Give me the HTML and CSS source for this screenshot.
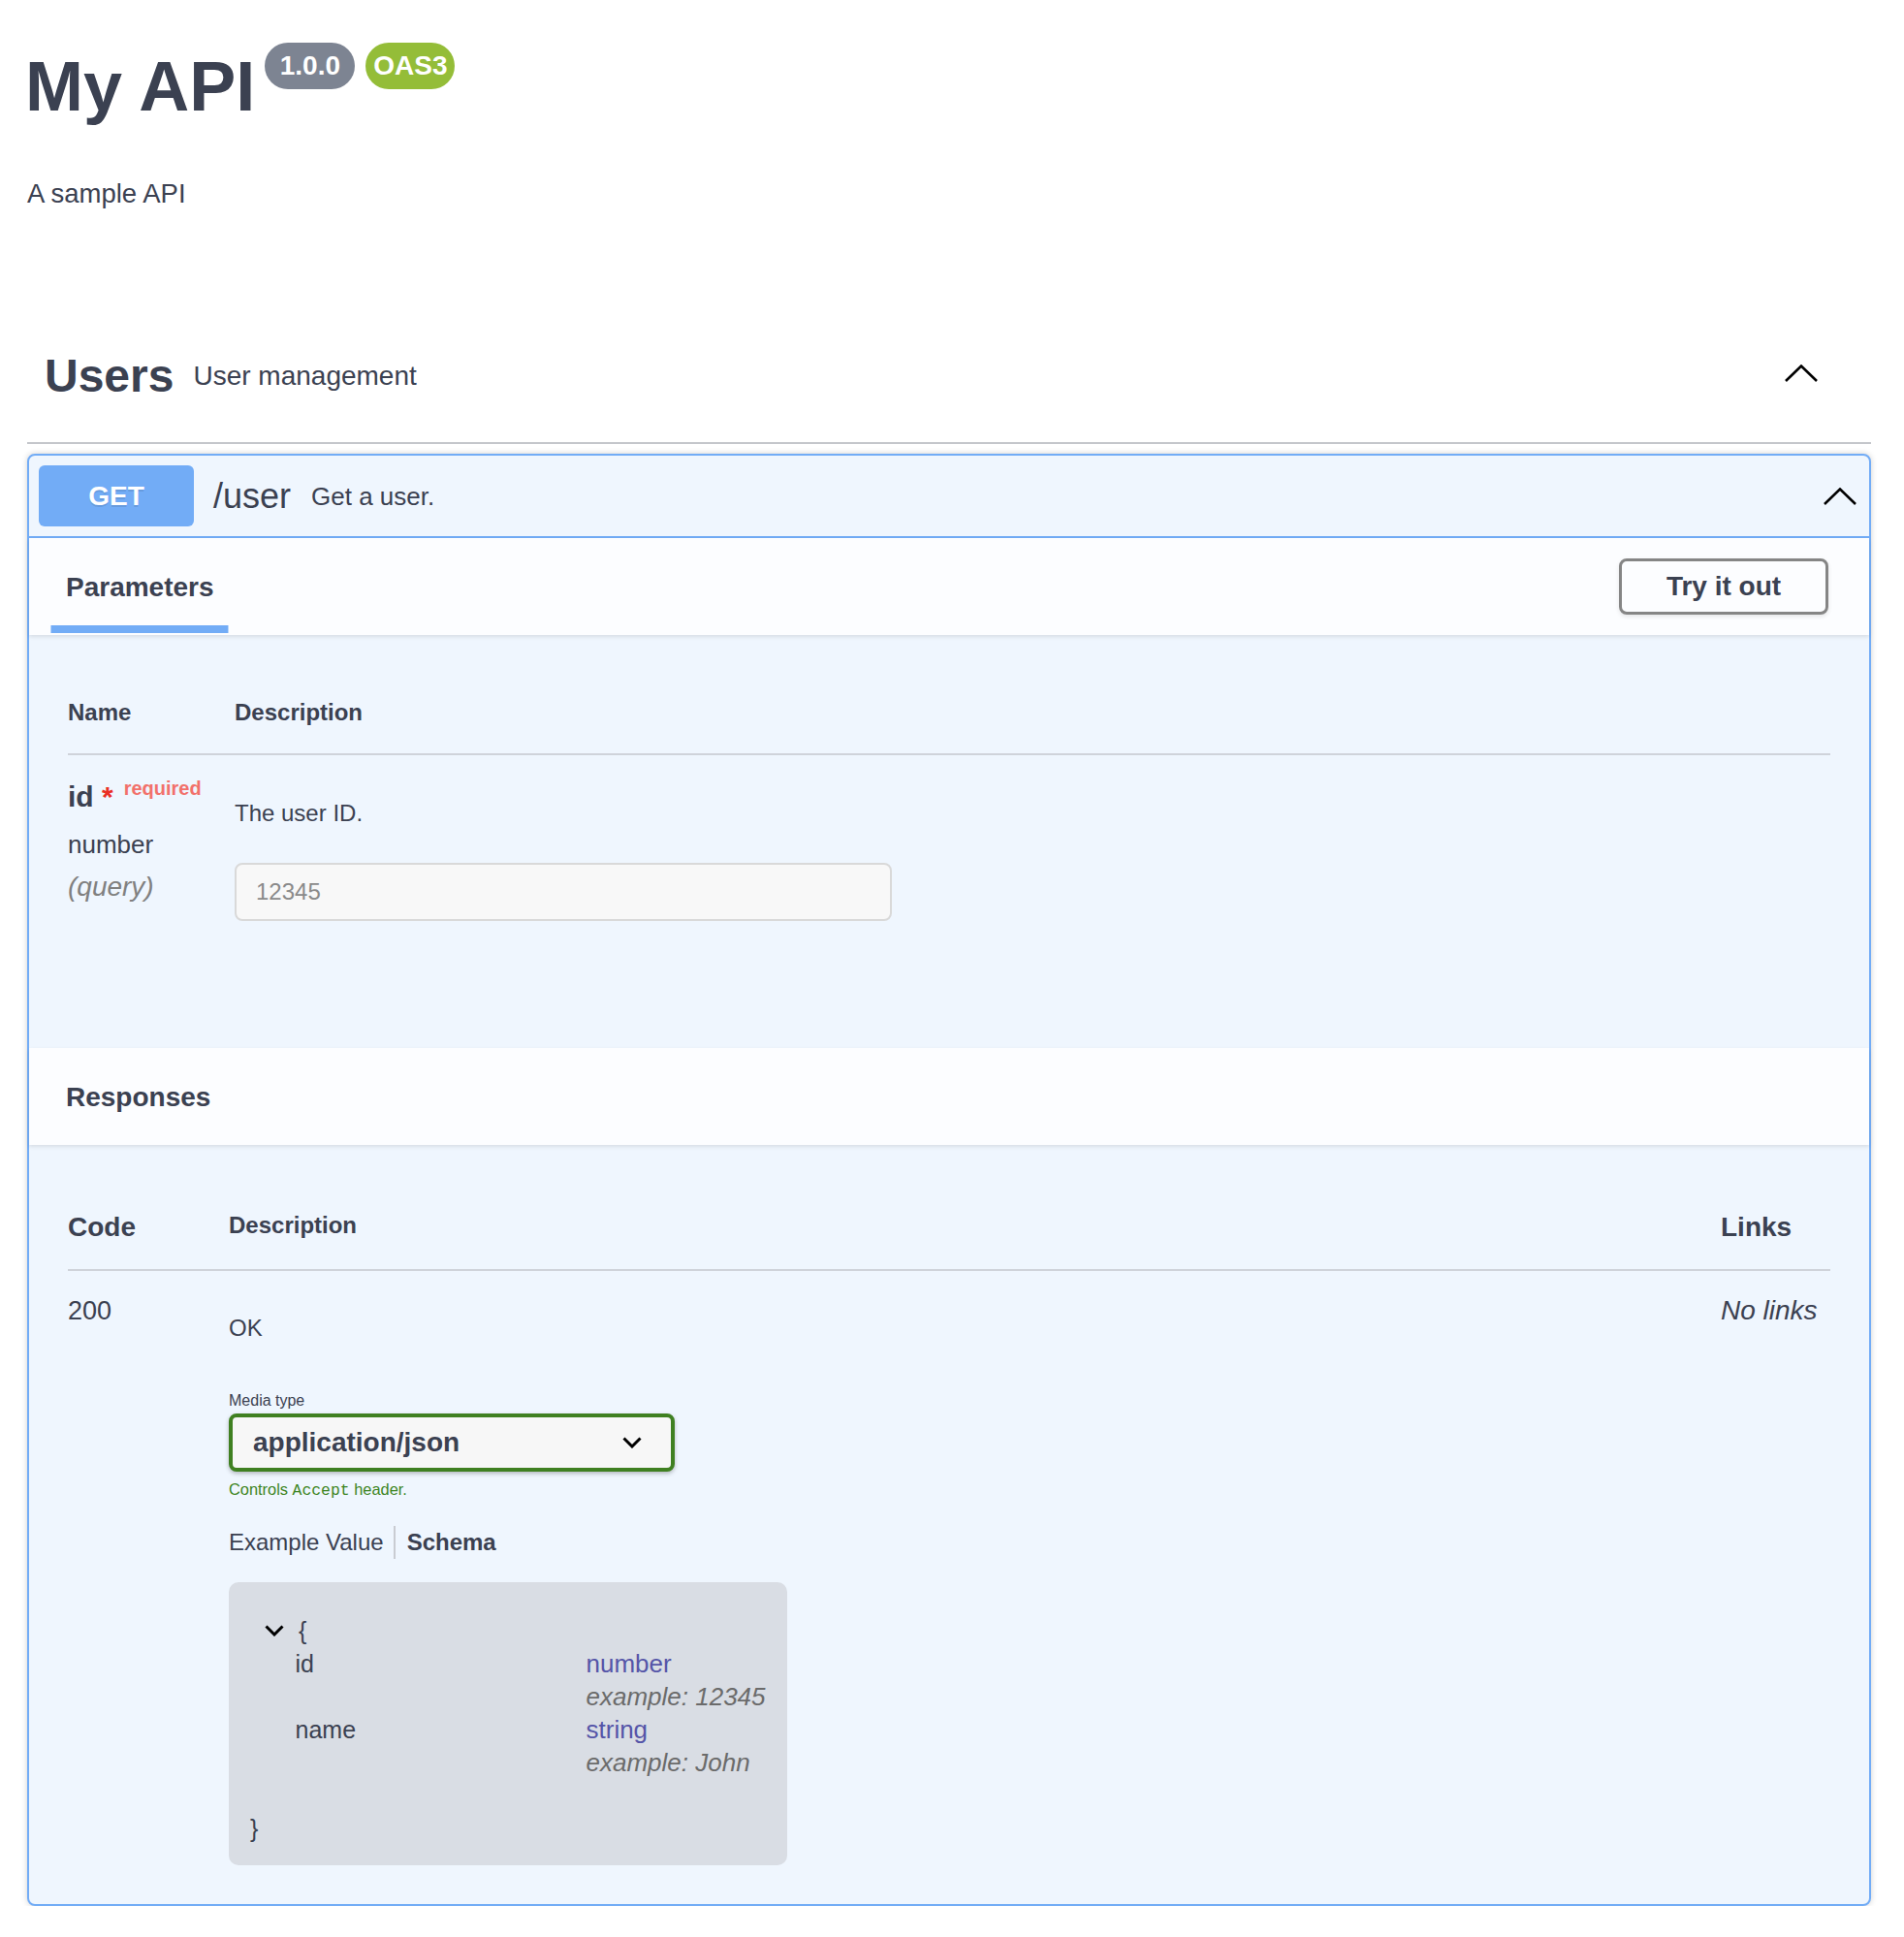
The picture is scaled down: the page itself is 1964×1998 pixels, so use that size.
FILE: index.html
```html
<!DOCTYPE html>
<html lang="en">
<head>
<meta charset="utf-8">
<title>My API</title>
<link rel="stylesheet" href="styles.css">
</head>
<body>
<div class="wrapper">
  <section class="info">
    <div class="title-row">
      <h2 class="title">My API</h2>
      <span class="badge badge-version">1.0.0</span>
      <span class="badge badge-oas">OAS3</span>
    </div>
    <p class="info-desc">A sample API</p>
  </section>

  <section class="tag-section">
    <div class="tag-header">
      <h3 class="tag-name">Users</h3>
      <span class="tag-desc">User management</span>
      <svg class="chev chev-tag" viewBox="0 0 34 18"><polyline points="1,17 17,1.5 33,17"/></svg>
    </div>

    <div class="opblock">
      <div class="summary">
        <span class="method">GET</span>
        <span class="path">/user</span>
        <span class="summary-desc">Get a user.</span>
        <svg class="chev chev-op" viewBox="0 0 34 18"><polyline points="1,17 17,1.5 33,17"/></svg>
      </div>

      <div class="section-header">
        <div class="tab-item"><h4 class="tab-title">Parameters</h4></div>
        <button class="try-btn" type="button">Try it out</button>
      </div>

      <div class="params-body">
        <div class="ptable-head">
          <div class="col-name">Name</div>
          <div class="col-desc">Description</div>
        </div>
        <div class="ptable-row">
          <div class="col-name">
            <div class="param-name">id<span class="star">&nbsp;*</span><span class="req">required</span></div>
            <div class="param-type">number</div>
            <div class="param-in">(query)</div>
          </div>
          <div class="col-desc">
            <p class="param-desc">The user ID.</p>
            <input class="param-input" type="text" placeholder="12345">
          </div>
        </div>
      </div>

      <div class="section-header resp-header">
        <h4 class="section-title">Responses</h4>
      </div>

      <div class="resp-body">
        <div class="rtable-head">
          <div class="r-code rh-big">Code</div>
          <div class="r-desc rh-small">Description</div>
          <div class="r-links rh-big">Links</div>
        </div>
        <div class="rtable-row">
          <div class="r-code code-val">200</div>
          <div class="r-desc resp-desc">
            <p class="ok">OK</p>
            <div class="media-title">Media type</div>
            <div class="media-select">
              <span>application/json</span>
              <svg class="sel-chev" viewBox="0 0 20 12"><polyline points="1.5,1.5 10,10 18.5,1.5"/></svg>
            </div>
            <div class="accept-msg">Controls <code>Accept</code> header.</div>
            <ul class="ex-tabs">
              <li class="ex-tab first">Example Value</li>
              <li class="ex-tab active">Schema</li>
            </ul>
            <div class="model-box">
              <div class="m-line">
                <svg class="m-chev" viewBox="0 0 20 12"><polyline points="1.5,1.5 10,10 18.5,1.5"/></svg>
                <span>{</span>
              </div>
              <div class="m-prop">
                <span class="m-key">id</span>
                <div class="m-val">
                  <div class="m-type">number</div>
                  <div class="m-ex">example: 12345</div>
                </div>
              </div>
              <div class="m-prop">
                <span class="m-key">name</span>
                <div class="m-val">
                  <div class="m-type">string</div>
                  <div class="m-ex">example: John</div>
                </div>
              </div>
              <div class="m-line"></div>
              <div class="m-line">}</div>
            </div>
          </div>
          <div class="r-links no-links">No links</div>
        </div>
      </div>
    </div>
  </section>
</div>
</body>
</html>
```

FILE: styles.css
```css
* { box-sizing: border-box; }

html, body { margin: 0; padding: 0; }

body {
  background: #ffffff;
  color: #3b4151;
  font-family: "Liberation Sans", Arial, Helvetica, sans-serif;
}

.wrapper { padding: 0 34px 0 28px; }

/* ---------- info ---------- */
.title-row {
  display: flex;
  align-items: flex-start;
  padding-top: 44px;
}

.title {
  margin: 5px 0 0 -2px;
  font-size: 72px;
  line-height: 80px;
  font-weight: 700;
}

.badge {
  display: block;
  height: 48px;
  line-height: 48px;
  border-radius: 24px;
  color: #ffffff;
  font-size: 28px;
  font-weight: 700;
  text-align: center;
}

.badge-version { width: 93px; margin-left: 10px; background: #7d8492; }
.badge-oas { width: 92px; margin-left: 11px; background: #94bd38; }

.info-desc {
  margin: 53px 0 0;
  font-size: 27.5px;
  line-height: 36px;
}

/* ---------- tag ---------- */
.tag-section { margin-top: 121px; }

.tag-header {
  display: flex;
  align-items: center;
  padding: 21px 55px 40px 18px;
  border-bottom: 2px solid #c4c6cb;
}

.tag-name {
  margin: 0;
  font-size: 48px;
  line-height: 56px;
  font-weight: 700;
}

.tag-desc {
  flex: 1;
  padding: 0 20px;
  font-size: 28px;
  line-height: 32px;
}

.chev {
  display: block;
  flex: none;
  width: 34px;
  height: 18px;
  fill: none;
  stroke: #000000;
  stroke-width: 2.6;
}

.chev-tag { margin-bottom: 6px; }

/* ---------- opblock ---------- */
.opblock {
  margin-top: 10px;
  border: 2px solid #72acf6;
  border-radius: 8px;
  background: #eff6fe;
  box-shadow: 0 0 6px rgba(0, 0, 0, 0.19);
}

.summary {
  display: flex;
  align-items: center;
  padding: 10px 13px 10px 10px;
  border-bottom: 2px solid #72acf6;
}

.method {
  flex: none;
  width: 160px;
  height: 63px;
  line-height: 63px;
  border-radius: 6px;
  background: #72acf6;
  color: #ffffff;
  font-size: 28px;
  font-weight: 700;
  text-align: center;
  text-shadow: 0 2px 0 rgba(0, 0, 0, 0.1);
}

.path {
  padding: 0 20px;
  font-size: 36px;
  line-height: 42px;
}

.summary-desc {
  flex: 1;
  padding-left: 1px;
  font-size: 26px;
  line-height: 30px;
}

.section-header {
  position: relative;
  display: flex;
  align-items: center;
  justify-content: space-between;
  height: 100px;
  padding: 2px 42px 0 38px;
  background: rgba(255, 255, 255, 0.8);
  box-shadow: 0 2px 4px rgba(0, 0, 0, 0.1);
}

.tab-title,
.section-title {
  margin: 0;
  font-size: 28px;
  line-height: 32px;
  font-weight: 700;
}

.tab-title { position: relative; }

.tab-title::after {
  content: "";
  position: absolute;
  left: 50%;
  bottom: -31px;
  width: 120%;
  height: 8px;
  background: #72acf6;
  transform: translateX(-50%);
}

.try-btn {
  width: 216px;
  height: 58px;
  margin-top: -2px;
  padding: 0;
  border: 3px solid #858585;
  border-radius: 8px;
  background: transparent;
  box-shadow: 0 2px 4px rgba(0, 0, 0, 0.1);
  color: #3b4151;
  font-family: "Liberation Sans", Arial, Helvetica, sans-serif;
  font-size: 28px;
  font-weight: 700;
}

/* ---------- parameters ---------- */
.params-body { padding: 40px 40px 131px; }

.ptable-head {
  display: flex;
  padding: 26px 0 28px;
  border-bottom: 2px solid #cfd3da;
  font-size: 24px;
  line-height: 28px;
  font-weight: 700;
}

.col-name { flex: none; width: 172px; }
.col-desc { flex: 1; }

.ptable-row { display: flex; }

.param-name {
  margin-top: 24px;
  font-size: 30px;
  line-height: 36px;
  font-weight: 700;
}

.star { color: #ea2f25; }

.req {
  padding-left: 11px;
  color: #f2716b;
  font-size: 20px;
  line-height: 20px;
  vertical-align: 12px;
}

.param-type {
  margin-top: 16px;
  font-size: 26px;
  line-height: 30px;
}

.param-in {
  margin-top: 14px;
  color: #808080;
  font-size: 28px;
  line-height: 30px;
  font-style: italic;
}

.param-desc {
  margin: 46px 0 0;
  font-size: 24px;
  line-height: 28px;
}

.param-input {
  display: block;
  margin-top: 37px;
  width: 678px;
  height: 60px;
  padding: 0 18px 0 20px;
  border: 2px solid #d9d9d9;
  border-radius: 8px;
  background: #f8f8f8;
  color: #3b4151;
  font-family: "Liberation Sans", Arial, Helvetica, sans-serif;
  font-size: 24px;
}

.param-input::placeholder { color: #8a8a8a; }

/* ---------- responses ---------- */
.resp-body { padding: 0 40px 40px; }

.rtable-head {
  display: flex;
  align-items: flex-start;
  padding: 69px 0 27px;
  border-bottom: 2px solid #cfd3da;
  font-weight: 700;
}

.r-code { flex: none; width: 166px; }
.r-desc { flex: 1; }
.r-links { flex: none; width: 113px; }

.rh-big { font-size: 28px; line-height: 32px; }
.rh-small { font-size: 24px; line-height: 28px; }

.rtable-row {
  display: flex;
  align-items: flex-start;
  padding-top: 25px;
}

.code-val { font-size: 27px; line-height: 32px; }

.no-links {
  font-size: 28px;
  line-height: 32px;
  font-style: italic;
}

.resp-desc { padding-top: 20px; }

.ok {
  margin: 0;
  font-size: 24px;
  line-height: 28px;
}

.media-title {
  margin-top: 51px;
  font-size: 16px;
  line-height: 20px;
}

.media-select {
  display: flex;
  align-items: center;
  justify-content: space-between;
  margin-top: 3px;
  width: 460px;
  height: 60px;
  padding: 0 30px 0 21px;
  border: 4px solid #3f8021;
  border-radius: 8px;
  background: #f7f7f7;
  box-shadow: 0 2px 4px rgba(0, 0, 0, 0.25);
  font-size: 28px;
  font-weight: 700;
}

.sel-chev {
  display: block;
  width: 20px;
  height: 12px;
  fill: none;
  stroke: #000000;
  stroke-width: 3;
}

.accept-msg {
  margin-top: 8px;
  color: #3d8523;
  font-size: 16.4px;
  line-height: 20px;
}

.accept-msg code {
  font-family: "Liberation Mono", "Courier New", monospace;
  font-size: 16.4px;
}

.ex-tabs {
  display: flex;
  margin: 26px 0 0;
  padding: 0;
  list-style: none;
  font-size: 24px;
  line-height: 34px;
}

.ex-tab.first {
  position: relative;
  padding-right: 24px;
}

.ex-tab.first::after {
  content: "";
  position: absolute;
  top: 0;
  right: 12px;
  width: 2px;
  height: 100%;
  background: #c9ccd2;
}

.ex-tab.active { font-weight: 700; }

.model-box {
  margin-top: 24px;
  width: 576px;
  padding: 33px 0 21px 22px;
  border-radius: 10px;
  background: #d9dde4;
  font-size: 25px;
  line-height: 34px;
}

.m-line {
  display: flex;
  align-items: center;
  height: 34px;
}

.m-chev {
  display: block;
  width: 20px;
  height: 12px;
  margin: 0 15px 0 15px;
  fill: none;
  stroke: #000000;
  stroke-width: 3;
}

.m-prop {
  display: flex;
  padding-left: 46.5px;
}

.m-key { flex: none; width: 300px; }

.m-type {
  color: #5555a8;
  font-size: 26px;
}

.m-ex {
  color: #6b6b6b;
  font-size: 26px;
  font-style: italic;
}
```
